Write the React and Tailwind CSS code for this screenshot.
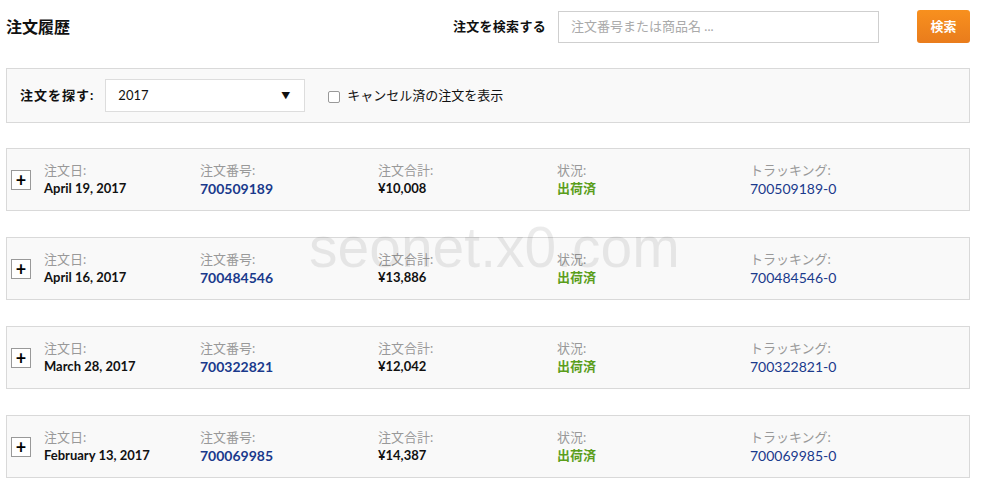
import React from 'react';

// order rows shown in the history list
const orders = [
  { date: 'April 19, 2017', number: '700509189', total: '¥10,008', status: '出荷済', tracking: '700509189-0' },
  { date: 'April 16, 2017', number: '700484546', total: '¥13,886', status: '出荷済', tracking: '700484546-0' },
  { date: 'March 28, 2017', number: '700322821', total: '¥12,042', status: '出荷済', tracking: '700322821-0' },
  { date: 'February 13, 2017', number: '700069985', total: '¥14,387', status: '出荷済', tracking: '700069985-0' },
];

const font = { fontFamily: 'Lato, "Noto Sans CJK JP", sans-serif' };

function OrderRow({ order }) {
  return (
    <div className="flex items-center h-[63px] bg-[#f9f9f9] border border-[#d9d9d9] pl-[4px]">
      <div className="w-[33px] shrink-0">
        <div className="w-[20px] h-[20px] border border-[#999] bg-white flex items-center justify-center text-[18px] leading-none text-black font-bold">
          +
        </div>
      </div>
      <div className="w-[156px] shrink-0">
        <div className="text-[13px] leading-[18px] text-[#999]">注文日:</div>
        <div className="text-[13px] leading-[19px] font-bold text-[#111]">{order.date}</div>
      </div>
      <div className="w-[178px] shrink-0">
        <div className="text-[13px] leading-[18px] text-[#999]">注文番号:</div>
        <div className="text-[14px] leading-[19px] font-bold text-[#1a3a8c]">{order.number}</div>
      </div>
      <div className="w-[179px] shrink-0">
        <div className="text-[13px] leading-[18px] text-[#999]">注文合計:</div>
        <div className="text-[13px] leading-[19px] font-bold text-[#111]">{order.total}</div>
      </div>
      <div className="w-[193px] shrink-0">
        <div className="text-[13px] leading-[18px] text-[#999]">状況:</div>
        <div className="text-[13px] leading-[19px] font-bold text-[#5b9e1c]">{order.status}</div>
      </div>
      <div className="flex-1">
        <div className="text-[13px] leading-[18px] text-[#999]">トラッキング:</div>
        <div className="text-[14px] leading-[19px] text-[#1a3a8c]">{order.tracking}</div>
      </div>
    </div>
  );
}

export default function App() {
  return (
    <div className="relative w-[986px] h-[503px] bg-white overflow-hidden pl-[6px] pr-[16px]" style={font}>
      {/* header: title + search */}
      <div className="flex items-center h-[52px] pt-[1px]">
        <h1 className="text-[16px] font-bold text-[#111] flex-1">注文履歴</h1>
        <span className="text-[13px] font-bold text-[#111] mr-[12px] tracking-[0.3px]">注文を検索する</span>
        <div className="w-[321px] h-[32px] border border-[#cfcfcf] bg-white flex items-center px-[12px] text-[13px] text-[#aaa]">
          注文番号または商品名 ...
        </div>
        <button className="ml-[38px] w-[53px] h-[33px] rounded-[3px] bg-gradient-to-b from-[#f8901e] to-[#e97c1c] text-white text-[13px] font-bold">
          検索
        </button>
      </div>

      {/* filter bar */}
      <div className="mt-[16px] h-[55px] bg-[#f9f9f9] border border-[#d9d9d9] flex items-center pl-[13px]">
        <span className="text-[13px] font-bold text-[#111] mr-[11px] tracking-[1px]">注文を探す:</span>
        <div className="w-[200px] h-[33px] bg-white border border-[#ddd] flex items-center justify-between pl-[12px] pr-[14px]">
          <span className="text-[13px] text-[#111]">2017</span>
          <span className="text-[9px] text-[#111]">▼</span>
        </div>
        <div className="ml-[23px] flex items-center">
          <span className="w-[12px] h-[12px] border border-[#999] rounded-[2px] bg-white mt-[3px]" />
          <span className="ml-[7px] text-[13px] text-[#111]">キャンセル済の注文を表示</span>
        </div>
      </div>

      {/* order list */}
      <div className="mt-[25px] flex flex-col gap-[26px]">
        {orders.map((o) => (
          <OrderRow key={o.number} order={o} />
        ))}
      </div>

      {/* watermark */}
      <div
        className="absolute left-[309px] top-[219px] text-[57px] leading-none text-black/[0.08] pointer-events-none"
        style={{ fontFamily: '"Liberation Sans", Arial, sans-serif' }}
      >
        seonet.x0.com
      </div>
    </div>
  );
}
